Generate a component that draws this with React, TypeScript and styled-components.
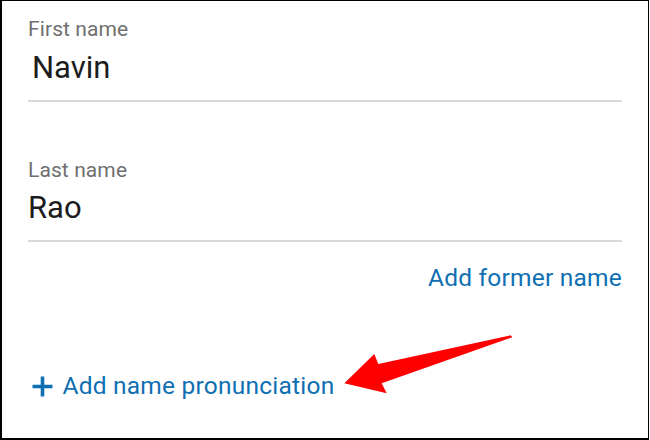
import React from "react";
import styled, { createGlobalStyle } from "styled-components";

const GlobalStyle = createGlobalStyle`
  html, body {
    margin: 0;
    padding: 0;
    background: #ffffff;
  }
  body {
    font-family: Roboto, "Liberation Sans", sans-serif;
  }
`;

const Frame = styled.div`
  position: relative;
  box-sizing: border-box;
  width: 649px;
  height: 440px;
  border-style: solid;
  border-color: #000;
  border-width: 1px 1px 2px 2px;
  background: #fff;
  padding: 16px 26px 0 26px;
  display: flex;
  flex-direction: column;
`;

const Field = styled.div<{ $first?: boolean }>`
  display: flex;
  flex-direction: column;
  gap: 8.5px;
  margin-top: ${(p) => (p.$first ? "0" : "56px")};
  padding-bottom: 14px;
  border-bottom: 2px solid #d9d9d9;
`;

const Label = styled.div`
  font-size: 21px;
  line-height: 24px;
  color: #6f6f6f;
  letter-spacing: 0.1px;
`;

const Value = styled.div<{ $indent?: number }>`
  font-size: 31px;
  line-height: 36px;
  color: #1c1c1c;
  padding-left: ${(p) => p.$indent ?? 0}px;
`;

const LinkRow = styled.div`
  display: flex;
  justify-content: flex-end;
  margin-top: 21px;
`;

const Link = styled.span`
  font-size: 24.5px;
  line-height: 30px;
  color: #0e6fb3;
  letter-spacing: 0.22px;
`;

const AddButton = styled.div`
  display: flex;
  align-items: center;
  gap: 10px;
  margin-top: 78px;
  padding-left: 3.5px;
`;

const Arrow = styled.svg`
  position: absolute;
  left: -2px;
  top: -1px;
  pointer-events: none;
`;

function PlusIcon() {
  return (
    <svg width="21" height="21" viewBox="0 0 21 21">
      <path d="M10.5 0.5v20M0.5 10.5h20" stroke="#0e6fb3" strokeWidth="3.6" />
    </svg>
  );
}

export default function App() {
  return (
    <>
      <GlobalStyle />
      <Frame>
        <Field $first>
          <Label>First name</Label>
          <Value $indent={4}>Navin</Value>
        </Field>
        <Field>
          <Label>Last name</Label>
          <Value>Rao</Value>
        </Field>
        <LinkRow>
          <Link>Add former name</Link>
        </LinkRow>
        <AddButton>
          <PlusIcon />
          <Link>Add name pronunciation</Link>
        </AddButton>
        <Arrow width="650" height="440" viewBox="0 0 650 440">
          <polygon
            points="344.3,383.3 374.3,354 378.3,364 510.5,335.3 512.3,337.2 381.7,383.3 386.7,393.3"
            fill="#ff0000"
            strokeLinejoin="round"
          />
        </Arrow>
      </Frame>
    </>
  );
}
